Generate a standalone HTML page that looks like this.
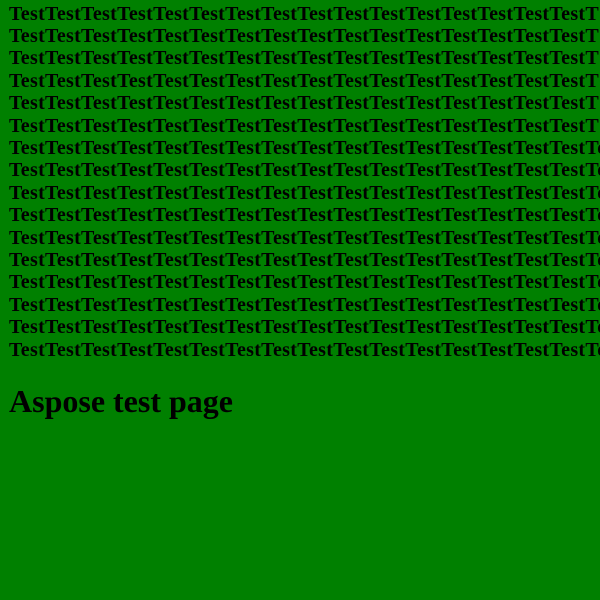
<!DOCTYPE html>
<html><head><style>
html,body{margin:0;padding:0;background:#008000;width:600px;height:600px;overflow:hidden}
#w{position:absolute;left:0;top:0;width:600px;height:600px;overflow:hidden}
.l{position:absolute;left:9px;white-space:nowrap;font:bold 20px/22.4px "Liberation Serif",serif;letter-spacing:0.3px;color:#000}
h1{position:absolute;left:9px;top:383px;margin:0;white-space:nowrap;font:bold 32px/36px "Liberation Serif",serif;color:#000}
</style></head><body><div id="w">
<div class="l" style="top:2.5px">TestTestTestTestTestTestTestTestTestTestTestTestTestTestTestTestT</div>
<div class="l" style="top:24.9px">TestTestTestTestTestTestTestTestTestTestTestTestTestTestTestTestT</div>
<div class="l" style="top:47.3px">TestTestTestTestTestTestTestTestTestTestTestTestTestTestTestTestT</div>
<div class="l" style="top:69.7px">TestTestTestTestTestTestTestTestTestTestTestTestTestTestTestTestT</div>
<div class="l" style="top:92.1px">TestTestTestTestTestTestTestTestTestTestTestTestTestTestTestTestT</div>
<div class="l" style="top:114.5px">TestTestTestTestTestTestTestTestTestTestTestTestTestTestTestTestT</div>
<div class="l" style="top:136.9px">TestTestTestTestTestTestTestTestTestTestTestTestTestTestTestTestTe</div>
<div class="l" style="top:159.3px">TestTestTestTestTestTestTestTestTestTestTestTestTestTestTestTestTe</div>
<div class="l" style="top:181.7px">TestTestTestTestTestTestTestTestTestTestTestTestTestTestTestTestTe</div>
<div class="l" style="top:204.1px">TestTestTestTestTestTestTestTestTestTestTestTestTestTestTestTestTe</div>
<div class="l" style="top:226.5px">TestTestTestTestTestTestTestTestTestTestTestTestTestTestTestTestTe</div>
<div class="l" style="top:248.9px">TestTestTestTestTestTestTestTestTestTestTestTestTestTestTestTestTe</div>
<div class="l" style="top:271.3px">TestTestTestTestTestTestTestTestTestTestTestTestTestTestTestTestTe</div>
<div class="l" style="top:293.7px">TestTestTestTestTestTestTestTestTestTestTestTestTestTestTestTestTe</div>
<div class="l" style="top:316.1px">TestTestTestTestTestTestTestTestTestTestTestTestTestTestTestTestTe</div>
<div class="l" style="top:338.5px">TestTestTestTestTestTestTestTestTestTestTestTestTestTestTestTestTe</div>
<h1>Aspose test page</h1>
</div></body></html>
